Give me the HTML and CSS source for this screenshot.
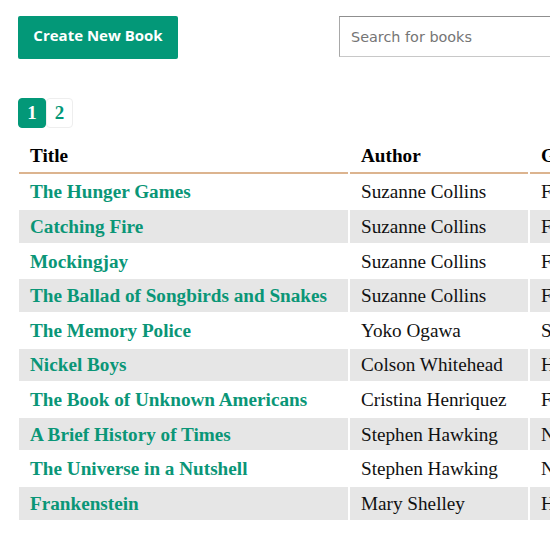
FILE: index.html
```html
<!DOCTYPE html>
<html lang="en">
<head>
<meta charset="utf-8">
<title>Books</title>
<link rel="stylesheet" href="styles.css">
</head>
<body>
<div class="page">
  <div class="toolbar">
    <button class="create-btn">Create New Book</button>
    <input class="search" type="text" placeholder="Search for books">
  </div>
  <div class="pagination">
    <span class="page-num active">1</span>
    <span class="page-num">2</span>
  </div>
  <table class="books">
    <thead>
      <tr><th class="col-title">Title</th><th class="col-author">Author</th><th class="col-genre">Genre</th></tr>
    </thead>
    <tbody>
      <tr><td><a href="#">The Hunger Games</a></td><td>Suzanne Collins</td><td>Fiction</td></tr>
      <tr><td><a href="#">Catching Fire</a></td><td>Suzanne Collins</td><td>Fiction</td></tr>
      <tr><td><a href="#">Mockingjay</a></td><td>Suzanne Collins</td><td>Fiction</td></tr>
      <tr><td><a href="#">The Ballad of Songbirds and Snakes</a></td><td>Suzanne Collins</td><td>Fiction</td></tr>
      <tr><td><a href="#">The Memory Police</a></td><td>Yoko Ogawa</td><td>Science Fiction</td></tr>
      <tr><td><a href="#">Nickel Boys</a></td><td>Colson Whitehead</td><td>Historical Fiction</td></tr>
      <tr><td><a href="#">The Book of Unknown Americans</a></td><td>Cristina Henriquez</td><td>Fiction</td></tr>
      <tr><td><a href="#">A Brief History of Times</a></td><td>Stephen Hawking</td><td>Non Fiction</td></tr>
      <tr><td><a href="#">The Universe in a Nutshell</a></td><td>Stephen Hawking</td><td>Non Fiction</td></tr>
      <tr><td><a href="#">Frankenstein</a></td><td>Mary Shelley</td><td>Horror</td></tr>
    </tbody>
  </table>
</div>
</body>
</html>
```
FILE: styles.css
```css
html, body {
  margin: 0;
  padding: 0;
  overflow: hidden;
  background: #fff;
}
.page {
  width: 760px;
  padding: 16px 18px;
  font-family: "Liberation Serif", "Times New Roman", serif;
}
.toolbar {
  display: flex;
  align-items: flex-start;
  gap: 161px;
}
.create-btn {
  width: 160px;
  height: 43px;
  background: #039878;
  color: #fff;
  border: none;
  border-radius: 2px;
  font-family: "Open Sans", "DejaVu Sans", sans-serif;
  font-weight: bold;
  font-size: 15px;
  padding: 0 0 5px;
  cursor: pointer;
}
.search {
  width: 300px;
  height: 41px;
  box-sizing: border-box;
  border: 1px solid #c8c8c8;
  border-top-color: #8f8f8f;
  border-left-color: #a8a8a8;
  padding: 0 11px;
  font-family: "DejaVu Sans", Verdana, sans-serif;
  font-size: 14.4px;
  color: #333;
  outline: none;
}
.search::placeholder {
  color: #757575;
}
.pagination {
  display: flex;
  margin-top: 39px;
}
.page-num {
  display: flex;
  align-items: center;
  justify-content: center;
  height: 30px;
  width: 27px;
  box-sizing: border-box;
  border: 1px solid #eeeeee;
  border-radius: 4px;
  color: #039878;
  font-weight: bold;
  font-size: 19px;
}
.page-num.active {
  width: 28px;
  background: #039878;
  border-color: #039878;
  color: #fff;
}
.books {
  margin-top: 9px;
  margin-left: -1px;
  border-collapse: separate;
  border-spacing: 2px;
  font-size: 19.2px;
  line-height: 21px;
  table-layout: fixed;
}
.books th, .books td {
  text-align: left;
  padding: 5.8px 11px;
  white-space: nowrap;
}
.books th {
  font-weight: bold;
  color: #000;
  border-bottom: 2px solid #dcb48f;
}
.col-title { width: 307px; }
.col-author { width: 156px; }
.col-genre { width: 160px; }
.books tbody tr:nth-child(even) td {
  background: #e6e6e6;
}
.books td {
  color: #111;
}
.books a {
  color: #0a9677;
  font-weight: bold;
  text-decoration: none;
}
```
